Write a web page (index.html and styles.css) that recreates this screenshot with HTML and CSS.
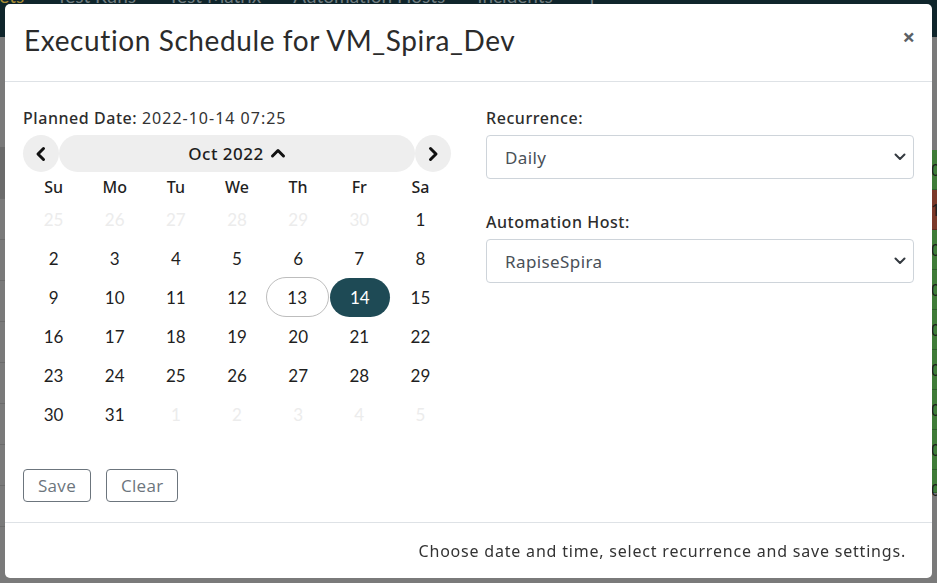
FILE: index.html
```html
<!DOCTYPE html>
<html lang="en">
<head>
<meta charset="utf-8">
<title>Execution Schedule</title>
<link rel="stylesheet" href="styles.css">
</head>
<body>
<div class="page">
  <nav class="topnav">
    <span class="nav-item active">Sets</span>
    <span class="nav-item">Test Runs</span>
    <span class="nav-item">Test Matrix</span>
    <span class="nav-item">Automation Hosts</span>
    <span class="nav-item">Incidents</span>
    <span class="nav-item">&#9906;</span>
  </nav>
  <div class="page-content">
    <div class="side-left">
      <div class="lrow head"></div>
      <div class="lrow"></div><div class="lrow"></div><div class="lrow"></div><div class="lrow"></div>
      <div class="lrow"></div><div class="lrow"></div><div class="lrow"></div><div class="lrow"></div>
    </div>
    <div class="side-right">
      <div class="cell pass">0</div>
      <div class="cell fail">1</div>
      <div class="cell pass">0</div>
      <div class="cell pass">0</div>
      <div class="cell pass">0</div>
      <div class="cell pass">0</div>
      <div class="cell pass">0</div>
      <div class="cell pass">0</div>
      <div class="cell pass short">0</div>
    </div>
  </div>
</div>

<div class="modal">
  <div class="modal-header">
    <h1 class="modal-title">Execution Schedule for VM_Spira_Dev</h1>
    <span class="close">&times;</span>
  </div>
  <div class="modal-body">
    <div class="col">
      <div class="label">Planned Date: <span class="value">2022-10-14 07:25</span></div>
      <div class="cal-nav">
        <div class="cal-btn">
          <svg width="14" height="16" viewBox="0 0 14 16"><path d="M9.5 2.5 L4 8 L9.5 13.5" fill="none" stroke="#111" stroke-width="3" stroke-linecap="round" stroke-linejoin="round"/></svg>
        </div>
        <div class="cal-month">Oct 2022
          <svg class="up" width="16" height="12" viewBox="0 0 16 12"><path d="M2.5 9 L8 3.5 L13.5 9" fill="none" stroke="#111" stroke-width="3" stroke-linecap="round" stroke-linejoin="round"/></svg>
        </div>
        <div class="cal-btn">
          <svg width="14" height="16" viewBox="0 0 14 16"><path d="M4.5 2.5 L10 8 L4.5 13.5" fill="none" stroke="#111" stroke-width="3" stroke-linecap="round" stroke-linejoin="round"/></svg>
        </div>
      </div>
      <div class="weekdays">
        <span>Su</span><span>Mo</span><span>Tu</span><span>We</span><span>Th</span><span>Fr</span><span>Sa</span>
      </div>
      <div class="days">
        <span class="day muted">25</span><span class="day muted">26</span><span class="day muted">27</span><span class="day muted">28</span><span class="day muted">29</span><span class="day muted">30</span><span class="day">1</span>
        <span class="day">2</span><span class="day">3</span><span class="day">4</span><span class="day">5</span><span class="day">6</span><span class="day">7</span><span class="day">8</span>
        <span class="day">9</span><span class="day">10</span><span class="day">11</span><span class="day">12</span><span class="day today">13</span><span class="day selected">14</span><span class="day">15</span>
        <span class="day">16</span><span class="day">17</span><span class="day">18</span><span class="day">19</span><span class="day">20</span><span class="day">21</span><span class="day">22</span>
        <span class="day">23</span><span class="day">24</span><span class="day">25</span><span class="day">26</span><span class="day">27</span><span class="day">28</span><span class="day">29</span>
        <span class="day">30</span><span class="day">31</span><span class="day muted">1</span><span class="day muted">2</span><span class="day muted">3</span><span class="day muted">4</span><span class="day muted">5</span>
      </div>
      <div class="actions">
        <button class="btn">Save</button>
        <button class="btn">Clear</button>
      </div>
    </div>
    <div class="col">
      <div class="label">Recurrence:</div>
      <div class="select">
        <span>Daily</span>
        <svg width="12" height="8" viewBox="0 0 12 8"><path d="M1.5 1.5 L6 6 L10.5 1.5" fill="none" stroke="#343a40" stroke-width="2" stroke-linecap="round" stroke-linejoin="round"/></svg>
      </div>
      <div class="label second">Automation Host:</div>
      <div class="select">
        <span>RapiseSpira</span>
        <svg width="12" height="8" viewBox="0 0 12 8"><path d="M1.5 1.5 L6 6 L10.5 1.5" fill="none" stroke="#343a40" stroke-width="2" stroke-linecap="round" stroke-linejoin="round"/></svg>
      </div>
    </div>
  </div>
  <div class="modal-footer">Choose date and time, select recurrence and save settings.</div>
</div>
</body>
</html>
```

FILE: styles.css
```css
* { box-sizing: border-box; }

html, body {
  margin: 0;
  padding: 0;
}

body {
  width: 937px;
  height: 583px;
  overflow: hidden;
  background: #7a7a7a;
  font-family: "Noto Sans", sans-serif;
  color: #212529;
}

/* ---------- background page ---------- */
.page {
  width: 937px;
  height: 583px;
  display: flex;
  flex-direction: column;
}

.topnav {
  height: 37px;
  background: #0f252b;
  display: flex;
  gap: 32px;
  overflow: hidden;
}

.nav-item {
  font-family: "Lato", sans-serif;
  font-size: 19px;
  line-height: 19px;
  margin-top: -14px;
  color: #6f7c80;
  white-space: nowrap;
}

.nav-item.active { color: #a88c35; margin-left: -11px; }

.page-content {
  flex: 1;
  display: flex;
  justify-content: space-between;
  padding-top: 113px;
}

.side-left {
  width: 40px;
  display: flex;
  flex-direction: column;
  margin-top: -3px;
}

.lrow {
  height: 41px;
  border-bottom: 1px solid #6c6c6c;
}

.lrow.head {
  height: 52px;
  background: #6b6b6b;
}

.side-right {
  width: 60px;
  display: flex;
  flex-direction: column;
}

.cell {
  height: 40px;
  border-bottom: 1px solid #2f5f2c;
  background: #3f7c38;
  color: #1c1c1c;
  font-size: 16px;
  line-height: 40px;
  padding-left: 54px;
}

.cell.fail { background: #7b3a2a; border-bottom-color: #5e2c20; }
.cell.short { height: 23px; }

/* ---------- modal ---------- */
.modal {
  position: fixed;
  left: 5px;
  top: 4px;
  width: 927px;
  height: 574px;
  background: #fff;
  border-radius: 5px;
  display: flex;
  flex-direction: column;
}

.modal-header {
  height: 78px;
  border-bottom: 1px solid #dee2e6;
  display: flex;
  align-items: center;
  justify-content: space-between;
  padding: 0 18px 0 19px;
}

.modal-title {
  margin: 0;
  font-family: "Lato", sans-serif;
  font-weight: 400;
  font-size: 28px;
  letter-spacing: 0.6px;
  color: #2b2b2b;
  line-height: 1;
  margin-top: -6px;
}

.close {
  font-size: 22px;
  font-weight: 700;
  color: #5b6066;
  line-height: 1;
  margin-top: -13px;
  margin-right: -1px;
}

.modal-body {
  flex: 1;
  display: grid;
  grid-template-columns: 428px 428px;
  column-gap: 35px;
  padding: 24px 18px 0 18px;
}

.col {
  display: flex;
  flex-direction: column;
}

.label {
  font-family: "Noto Sans", sans-serif;
  font-weight: 500;
  font-size: 16px;
  line-height: 24px;
  color: #2d2d2d;
  letter-spacing: 0.55px;
}

.label .value {
  font-weight: 400;
  color: #333;
  letter-spacing: 1px;
}

.label.second { margin-top: 31px; }

/* calendar */
.cal-nav {
  margin-top: 5px;
  height: 37px;
  display: flex;
}

.cal-btn {
  width: 36px;
  height: 37px;
  border-radius: 50%;
  background: #eeeeee;
  display: flex;
  align-items: center;
  justify-content: center;
  flex: none;
}

.cal-month {
  flex: 1;
  background: #eeeeee;
  border-radius: 19px;
  display: flex;
  align-items: center;
  justify-content: center;
  gap: 6px;
  font-family: "Noto Sans", sans-serif;
  font-weight: 500;
  font-size: 17px;
  color: #1d1d1d;
  letter-spacing: 0.5px;
}

.cal-month .up { margin-top: -2px; }

.weekdays {
  display: grid;
  grid-template-columns: repeat(7, 1fr);
  height: 28px;
  padding-top: 1px;
  align-items: center;
  text-align: center;
  font-family: "Noto Sans", sans-serif;
  font-weight: 500;
  font-size: 16px;
  color: #1f1f1f;
}

.days {
  display: grid;
  grid-template-columns: repeat(7, 1fr);
  grid-auto-rows: 39px;
  font-family: "Lato", sans-serif;
  font-size: 17px;
  color: #1f1f1f;
}

.day {
  display: flex;
  align-items: center;
  justify-content: center;
  border-radius: 20px;
}

.day.muted { color: #ececec; }

.day.today {
  border: 1px solid #bdbdbd;
  margin: -1px 0 0 -2px;
  height: 40px;
}

.day.selected {
  background: #1e4a55;
  color: #fff;
  margin: 0 0 0 1px;
}

.actions {
  margin-top: 35px;
  display: flex;
  gap: 15px;
}

.btn {
  height: 33px;
  padding: 0 14px;
  border: 1px solid #6c757d;
  border-radius: 4px;
  background: #fff;
  font-family: "Open Sans", sans-serif;
  font-size: 17px;
  letter-spacing: 0.3px;
  color: #6c757d;
}

/* select */
.select {
  margin-top: 5px;
  height: 44px;
  border: 1px solid #ced4da;
  border-radius: 4px;
  display: flex;
  align-items: center;
  justify-content: space-between;
  padding: 0 7px 0 18px;
  font-family: "Noto Sans", sans-serif;
  font-size: 17px;
  letter-spacing: 0.4px;
  color: #495057;
}

/* footer */
.modal-footer {
  height: 56px;
  border-top: 1px solid #dee2e6;
  display: flex;
  align-items: center;
  justify-content: flex-end;
  padding: 0 26px 0 0;
  font-family: "Noto Sans", sans-serif;
  font-size: 16px;
  color: #333;
  letter-spacing: 0.8px;
}
```
